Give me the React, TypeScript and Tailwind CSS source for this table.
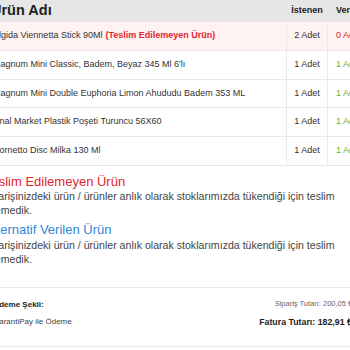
const rows = [
  { name: "Algida Viennetta Stick 90Ml", missing: true, req: "2 Adet", got: "0 Adet" },
  { name: "Magnum Mini Classic, Badem, Beyaz 345 Ml 6'lı", req: "1 Adet", got: "1 Adet" },
  { name: "Magnum Mini Double Euphoria Limon Ahududu Badem 353 ML", req: "1 Adet", got: "1 Adet" },
  { name: "Ünal Market Plastik Poşeti Turuncu 56X60", req: "1 Adet", got: "1 Adet" },
  { name: "Cornetto Disc Milka 130 Ml", req: "1 Adet", got: "1 Adet" },
];

export default function App() {
  return (
    <div className="w-[350px] h-[350px] overflow-hidden bg-white font-['Liberation_Sans',Arial,sans-serif]">
      <div className="ml-[-15px] w-[372px]">
        {/* table */}
        <div className="grid grid-cols-[301px_42px_29px]">
          <div className="h-[22px] bg-[#e6e6e6] flex items-center pl-[6px] text-[14.5px] font-bold text-[#222]">
            Ürün Adı
          </div>
          <div className="h-[22px] bg-[#e6e6e6] flex items-center justify-center text-[9px] font-bold text-[#222]">
            İstenen
          </div>
          <div className="h-[22px] bg-[#e6e6e6] flex items-center pl-[8px] text-[9px] font-bold text-[#222] whitespace-nowrap">
            Verilen
          </div>
          {rows.map((r, i) => (
            <div key={i} className="contents">
              <div
                className={`h-[28.75px] flex items-center pl-[8px] text-[9px] text-[#333] border-b border-[#e9e9e9] whitespace-nowrap ${
                  r.missing ? "bg-[#fff2f2]" : ""
                }`}
              >
                {r.name}
                {r.missing && (
                  <span className="ml-[3px] font-bold text-[#e3262e]">(Teslim Edilemeyen Ürün)</span>
                )}
              </div>
              <div
                className={`h-[28.75px] flex items-center justify-center text-[9px] text-[#333] border-b border-l border-r border-[#e9e9e9] ${
                  r.missing ? "bg-[#fff2f2]" : ""
                }`}
              >
                {r.req}
              </div>
              <div
                className={`h-[28.75px] flex items-center pl-[8px] text-[9px] border-b border-[#e9e9e9] whitespace-nowrap ${
                  r.missing ? "bg-[#fff2f2] text-[#e3262e]" : "text-[#62b23a]"
                }`}
              >
                {r.got}
              </div>
            </div>
          ))}
        </div>

        {/* notes */}
        <div className="mt-[8px]">
          <div className="text-[13px] leading-[15px] text-[#e3262e]">Teslim Edilemeyen Ürün</div>
          <p className="text-[10.6px] leading-[14px] text-[#444] w-[372px] -ml-[2px]">
            Siparişinizdeki ürün / ürünler anlık olarak stoklarımızda tükendiği için teslim edemedik.
          </p>
          <div className="mt-[5px] text-[13px] leading-[15px] text-[#2f86d8]">Alternatif Verilen Ürün</div>
          <p className="mt-[1px] text-[10.6px] leading-[14px] text-[#444] w-[372px] -ml-[2px]">
            Siparişinizdeki ürün / ürünler anlık olarak stoklarımızda tükendiği için teslim edemedik.
          </p>
        </div>

        {/* footer */}
        <div className="mt-[21px] border-t border-b border-[#eaeaea] h-[60px] flex justify-between pl-[8px] pr-[5px] pt-[11px]">
          <div className="flex flex-col gap-[7px] pt-[1px]">
            <div className="text-[8px] leading-[10px] font-bold text-[#222]">Ödeme Şekli:</div>
            <div className="text-[8px] leading-[10px] text-[#444]">GarantiPay ile Ödeme</div>
          </div>
          <div className="flex flex-col items-end gap-[8px]">
            <div className="text-[7.5px] leading-[10px] text-[#666]">Sipariş Tutarı: 200,05 ₺</div>
            <div className="text-[8.8px] leading-[10px] font-bold text-[#222]">Fatura Tutarı: 182,91 ₺</div>
          </div>
        </div>
      </div>
    </div>
  );
}
